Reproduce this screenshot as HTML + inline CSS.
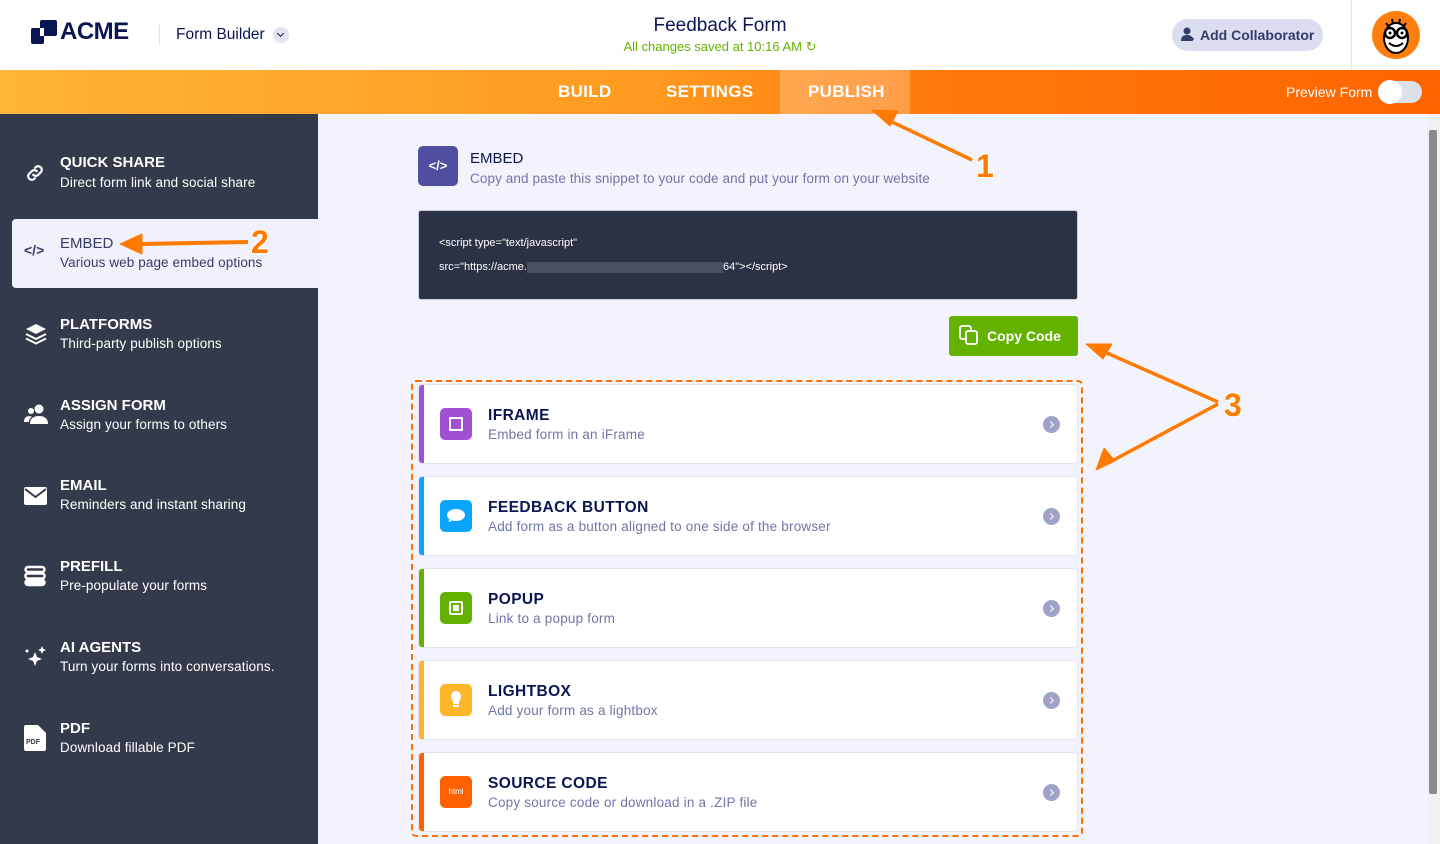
<!DOCTYPE html>
<html><head><meta charset="utf-8"><style>
*{box-sizing:border-box;margin:0;padding:0}
body{width:1440px;height:844px;overflow:hidden;font-family:"Liberation Sans",sans-serif;background:#f3f3fe;position:relative}
.hdr{position:absolute;left:0;top:0;width:1440px;height:70px;background:#fff}
.bar{position:absolute;left:0;top:70px;width:1440px;height:44px;background:linear-gradient(90deg,#ffb53a,#ff9a20 45%,#ff7a0a 65%,#ff6400)}
.tab{position:absolute;top:70px;height:44px;line-height:44px;color:#fff;font-size:17px;font-weight:bold;letter-spacing:.3px}
.side{position:absolute;left:0;top:114px;width:318px;height:730px;background:#333a4b}
.si{position:absolute;left:0;width:318px;color:#fff}
.si .t{position:absolute;left:60px;font-size:15px;font-weight:bold}
.si .d{position:absolute;left:60px;font-size:13.5px;letter-spacing:.1px}
.si svg{position:absolute;left:24px}
.card{position:absolute;left:418px;width:660px;height:80px;background:#fff;border:1px solid #e3e4f2;border-radius:4px;overflow:hidden}
.card .strip{position:absolute;left:0;top:0;width:5px;height:100%}
.card .ic{position:absolute;left:21px;top:23px;width:32px;height:32px;border-radius:5px}
.card .t{position:absolute;left:69px;top:22px;font-size:15.5px;font-weight:bold;color:#0a1551;letter-spacing:.4px}
.card .d{position:absolute;left:69px;top:42px;font-size:13.5px;color:#6f76a7;letter-spacing:.2px}
.card .ch{position:absolute;right:17px;top:31px;width:17px;height:17px;border-radius:50%;background:#a0a3c8}
.card .ch:after{content:"";position:absolute;left:5px;top:5.5px;width:4px;height:4px;border-right:1.8px solid #fff;border-top:1.8px solid #fff;transform:rotate(45deg)}
</style></head><body>
<div class="hdr">
 <svg style="position:absolute;left:31px;top:20px" width="26" height="25" viewBox="0 0 26 25"><rect x="9" y="0" width="17" height="16" rx="2" fill="#0a1551"/><rect x="0" y="8" width="13" height="16" rx="2" fill="#0a1551"/><rect x="9" y="8" width="4" height="8" fill="#fff"/></svg>
 <div style="position:absolute;left:60px;top:18px;font-size:24px;font-weight:bold;color:#0a1551;letter-spacing:-.5px">ACME</div>
 <div style="position:absolute;left:159px;top:25px;width:1px;height:20px;background:#dfe0ea"></div>
 <div style="position:absolute;left:176px;top:26px;font-size:15.5px;color:#0a1551">Form Builder</div>
 <div style="position:absolute;left:273px;top:27px;width:16px;height:16px;border-radius:50%;background:#e3e4f2"><div style="position:absolute;left:5px;top:4px;width:5px;height:5px;border-right:1.5px solid #0a1551;border-bottom:1.5px solid #0a1551;transform:rotate(45deg)"></div></div>
 <div style="position:absolute;left:0;width:1440px;top:15px;text-align:center;font-size:19px;color:#0a1551">Feedback Form</div>
 <div style="position:absolute;left:0;width:1440px;top:39px;text-align:center;font-size:13px;color:#64b200">All changes saved at 10:16 AM ↻</div>
 <div style="position:absolute;left:1172px;top:19px;width:151px;height:32px;border-radius:16px;background:#dbdef1;color:#343c6a;font-size:14px;font-weight:bold;line-height:32px;padding-left:28px">Add Collaborator</div>
 <svg style="position:absolute;left:1181px;top:27px" width="14" height="15" viewBox="0 0 14 15"><circle cx="6" cy="4" r="3.5" fill="#343c6a"/><path d="M0 14c0-5 3-6 6-6s4 1 5 2v4z" fill="#343c6a"/><path d="M11 10v4M9 12h4" stroke="#343c6a" stroke-width="1.5"/></svg>
 <div style="position:absolute;left:1351px;top:0;width:1px;height:70px;background:#e3e4ea"></div>
 <div style="position:absolute;left:1372px;top:11px;width:48px;height:48px;border-radius:50%;background:#ff7e0e;overflow:hidden">
  <svg width="48" height="48" viewBox="0 0 48 48"><ellipse cx="24" cy="27" rx="12" ry="15" fill="#fff" stroke="#000" stroke-width="2"/><circle cx="18" cy="22" r="5" fill="#fff" stroke="#000" stroke-width="2.5"/><circle cx="30" cy="22" r="5" fill="#fff" stroke="#000" stroke-width="2.5"/><circle cx="18" cy="22" r="1.5"/><circle cx="30" cy="22" r="1.5"/><path d="M17 32q7 6 14 0" stroke="#000" stroke-width="2" fill="none"/><path d="M14 12l3 4M20 8l1 5M28 8l-1 5M34 12l-3 4" stroke="#000" stroke-width="2"/></svg>
 </div>
</div>
<div class="bar"></div>
<div style="position:absolute;left:780px;top:70px;width:130px;height:44px;background:rgba(255,255,255,.25)"></div>
<div class="tab" style="left:558px">BUILD</div>
<div class="tab" style="left:666px">SETTINGS</div>
<div class="tab" style="left:808px">PUBLISH</div>
<div style="position:absolute;left:1286px;top:84px;color:#fff;font-size:14px">Preview Form</div>
<div style="position:absolute;left:1378px;top:81px;width:44px;height:22px;border-radius:11px;background:#dfe1ea"></div>
<div style="position:absolute;left:1378px;top:80px;width:24px;height:24px;border-radius:50%;background:#fff"></div>

<div class="side">
 <div class="si" style="top:0"><svg style="top:48px" width="22" height="22" viewBox="0 0 24 24" fill="none" stroke="#fff" stroke-width="2.4" stroke-linecap="round"><path d="M10 14a4 4 0 0 0 5.6 0l3-3a4 4 0 0 0-5.6-5.6l-1 1"/><path d="M14 10a4 4 0 0 0-5.6 0l-3 3a4 4 0 0 0 5.6 5.6l1-1"/></svg><div class="t" style="top:40px">QUICK SHARE</div><div class="d" style="top:61px">Direct form link and social share</div></div>
 <div style="position:absolute;left:12px;top:105px;width:306px;height:69px;background:#f1f1fc;border-radius:4px 0 0 4px"></div>
 <div class="si" style="top:105px;color:#343c6a"><div style="position:absolute;left:24px;top:23px;font-size:14px;font-weight:bold">&lt;/&gt;</div><div class="t" style="top:16px;font-weight:normal">EMBED</div><div class="d" style="top:36px">Various web page embed options</div></div>
 <div class="si" style="top:186px"><svg style="top:22px" width="24" height="24" viewBox="0 0 24 24" fill="#fff"><path d="M12 2l10 5-10 5L2 7z"/><path d="M2 12l10 5 10-5" stroke="#fff" stroke-width="2" fill="none"/><path d="M2 16.5l10 5 10-5" stroke="#fff" stroke-width="2" fill="none"/></svg><div class="t" style="top:16px">PLATFORMS</div><div class="d" style="top:36px">Third-party publish options</div></div>
 <div class="si" style="top:267px"><svg style="top:23px" width="24" height="20" viewBox="0 0 24 20" fill="#fff"><circle cx="15" cy="5" r="4.5"/><circle cx="7" cy="7" r="3"/><path d="M6 20c0-6 4-8 9-8s9 2 9 8z"/><path d="M0 18c0-4 2-6 6-6l2 1c-2 1-3 3-3 5z"/></svg><div class="t" style="top:16px">ASSIGN FORM</div><div class="d" style="top:36px">Assign your forms to others</div></div>
 <div class="si" style="top:348px"><svg style="top:25px" width="23" height="18" viewBox="0 0 23 18" fill="#fff"><rect width="23" height="18" rx="2"/><path d="M1 2l10.5 8L22 2" stroke="#333a4b" stroke-width="2" fill="none"/></svg><div class="t" style="top:15px">EMAIL</div><div class="d" style="top:35px">Reminders and instant sharing</div></div>
 <div class="si" style="top:429px"><svg style="top:22px" width="22" height="22" viewBox="0 0 22 22" fill="none" stroke="#fff" stroke-width="2.4"><rect x="1.5" y="2" width="19" height="5" rx="2.5"/><rect x="1.5" y="8.5" width="19" height="5" rx="2"/><rect x="1.5" y="15" width="19" height="5" rx="2.5" fill="#fff"/></svg><div class="t" style="top:15px">PREFILL</div><div class="d" style="top:35px">Pre-populate your forms</div></div>
 <div class="si" style="top:510px"><svg style="top:20px" width="24" height="24" viewBox="0 0 24 24" fill="#fff"><path d="M11 8l2 5 5 2-5 2-2 5-2-5-5-2 5-2z"/><path d="M18 2l1.2 2.8L22 6l-2.8 1.2L18 10l-1.2-2.8L14 6l2.8-1.2z"/><circle cx="3" cy="7" r="1.5"/></svg><div class="t" style="top:15px">AI AGENTS</div><div class="d" style="top:35px">Turn your forms into conversations.</div></div>
 <div class="si" style="top:591px"><svg style="top:20px" width="22" height="26" viewBox="0 0 22 26"><path d="M2 0h12l8 8v16a2 2 0 0 1-2 2H2a2 2 0 0 1-2-2V2a2 2 0 0 1 2-2z" fill="#fff"/><text x="2" y="19" font-size="7" font-weight="bold" font-family="Liberation Sans" fill="#333a4b">PDF</text></svg><div class="t" style="top:15px">PDF</div><div class="d" style="top:35px">Download fillable PDF</div></div>
</div>

<div style="position:absolute;left:418px;top:146px;width:40px;height:40px;border-radius:5px;background:#4f4ea0;color:#fff;font-size:13px;font-weight:bold;text-align:center;line-height:40px">&lt;/&gt;</div>
<div style="position:absolute;left:470px;top:150px;font-size:15px;color:#0a1551">EMBED</div>
<div style="position:absolute;left:470px;top:171px;font-size:13.5px;color:#6f76a7;letter-spacing:.1px">Copy and paste this snippet to your code and put your form on your website</div>
<div style="position:absolute;left:418px;top:210px;width:660px;height:90px;background:#2c3245;border:1px solid #c8cbe0;border-radius:3px"></div>
<div style="position:absolute;left:439px;top:237px;font-size:11px;color:#fff">&lt;script type="text/javascript"</div>
<div style="position:absolute;left:439px;top:261px;font-size:11px;color:#fff">src="https://acme.<span style="display:inline-block;width:196px;height:11px;background:#4a5063;vertical-align:middle"></span>64"&gt;&lt;/script&gt;</div>
<div style="position:absolute;left:949px;top:316px;width:129px;height:40px;border-radius:3px;background:#64b200;color:#fff;font-size:14px;font-weight:bold;line-height:40px;padding-left:38px">Copy Code</div>
<svg style="position:absolute;left:959px;top:325px" width="20" height="21" viewBox="0 0 20 21" fill="none" stroke="#fff" stroke-width="1.8"><rect x="1" y="1" width="11" height="13" rx="2"/><rect x="7" y="6" width="11" height="13" rx="2" fill="#64b200"/></svg>

<div style="position:absolute;left:411px;top:380px;width:672px;height:457px;border:2.5px dashed #ff6f00;border-radius:5px"></div>
<div class="card" style="top:384px"><div class="strip" style="background:#a24fd3"></div><div class="ic" style="background:#a24fd3"><div style="position:absolute;left:9px;top:9px;width:14px;height:14px;border:2px solid #fff"></div></div><div class="t">IFRAME</div><div class="d">Embed form in an iFrame</div><div class="ch"></div></div>
<div class="card" style="top:476px"><div class="strip" style="background:#0aa5ff"></div><div class="ic" style="background:#0aa5ff"><div style="position:absolute;left:7px;top:9px;width:18px;height:12px;border-radius:50%;background:#fff"></div><div style="position:absolute;left:9px;top:19px;width:0;height:0;border-left:4px solid #fff;border-bottom:4px solid transparent;transform:rotate(20deg)"></div></div><div class="t">FEEDBACK BUTTON</div><div class="d">Add form as a button aligned to one side of the browser</div><div class="ch"></div></div>
<div class="card" style="top:568px"><div class="strip" style="background:#64b200"></div><div class="ic" style="background:#64b200"><div style="position:absolute;left:9px;top:9px;width:14px;height:14px;border:2px solid #fff;border-radius:2px"></div><div style="position:absolute;left:13px;top:13px;width:6px;height:6px;background:#fff"></div></div><div class="t">POPUP</div><div class="d">Link to a popup form</div><div class="ch"></div></div>
<div class="card" style="top:660px"><div class="strip" style="background:#ffb629"></div><div class="ic" style="background:#ffb629"><div style="position:absolute;left:11px;top:7px;width:10px;height:11px;border-radius:50%;background:#fff"></div><div style="position:absolute;left:13px;top:16px;width:6px;height:4px;background:#fff"></div><div style="position:absolute;left:13px;top:21px;width:6px;height:2px;background:#fff"></div></div><div class="t">LIGHTBOX</div><div class="d">Add your form as a lightbox</div><div class="ch"></div></div>
<div class="card" style="top:752px"><div class="strip" style="background:#ff6100"></div><div class="ic" style="background:#ff6100;color:#fff;font-size:8px;text-align:center;line-height:32px">html</div><div class="t">SOURCE CODE</div><div class="d">Copy source code or download in a .ZIP file</div><div class="ch"></div></div>
<svg style="position:absolute;left:0;top:0" width="1440" height="844" viewBox="0 0 1440 844">
 <g fill="#ff7a00" stroke="#ff7a00" stroke-linejoin="round">
  <path d="M972 160L888 120" stroke-width="3.5"/><path d="M872 110l26 1-8 15z"/>
  <path d="M248 242L140 244" stroke-width="4"/><path d="M120 244l22-10v20z"/>
  <path d="M1218 402L1100 350" stroke-width="3.5"/><path d="M1086 344l26 0-9 15z"/>
  <path d="M1218 404L1110 462" stroke-width="3.5"/><path d="M1096 470l8-22 11 13z"/>
 </g>
 <g font-family="Liberation Sans" font-weight="bold" font-size="32" fill="#ff7a00" stroke="#fff" stroke-width="2" paint-order="stroke">
  <text x="976" y="177">1</text><text x="251" y="253">2</text><text x="1224" y="416">3</text>
 </g>
</svg>
<div style="position:absolute;left:1427px;top:114px;width:13px;height:730px;background:#f1f1f1"></div>
<div style="position:absolute;left:1429px;top:130px;width:8px;height:664px;background:#8a8a8a;border-radius:2px"></div>
</body></html>
